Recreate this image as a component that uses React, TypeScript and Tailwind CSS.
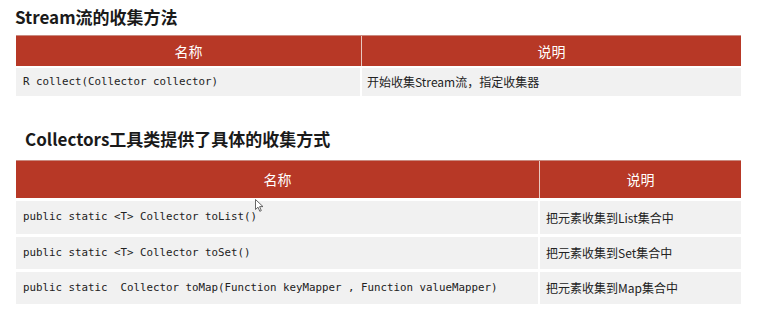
const cjk = "font-['Noto_Sans_CJK_SC','Noto_Sans',sans-serif]";
const mono = "font-['DejaVu_Sans_Mono','Liberation_Mono',monospace]";

const rows2 = [
  { name: "public static <T> Collector toList()", desc: "把元素收集到List集合中", h: "h-[33px]" },
  { name: "public static <T> Collector toSet()", desc: "把元素收集到Set集合中", h: "h-[32px]" },
  { name: "public static  Collector toMap(Function keyMapper , Function valueMapper)", desc: "把元素收集到Map集合中", h: "h-[32px]" },
];

function Cursor() {
  return (
    <svg className="absolute left-[255px] top-[199px]" width="9" height="13" viewBox="0 0 9 13">
      <path d="M0.5 0.5 L0.5 10.5 L3 8.2 L4.8 12.3 L6.3 11.6 L4.6 7.6 L8 7.6 Z" fill="#fff" stroke="#555" strokeWidth="0.9" />
    </svg>
  );
}

export default function App() {
  return (
    <div className={`relative w-[775px] h-[325px] bg-white text-[#222] ${cjk}`}>
      <div className="pl-[15px] pt-[4px] text-[17px] leading-[26px] font-bold text-[#1a1a1a]">Stream流的收集方法</div>

      {/* table 1 */}
      <div className="ml-[16px] mt-[5px] w-[725px] flex flex-col gap-[2px]">
        <div className="h-[31px] grid grid-cols-[346px_1fr] bg-[#b73826] border-t border-[#c98a80] text-white text-[14px]">
          <div className="flex items-center justify-center border-r border-[#e8c8c0]">名称</div>
          <div className="flex items-center justify-center">说明</div>
        </div>
        <div className="h-[28px] grid grid-cols-[346px_1fr] bg-[#f1f1f1] text-[12px]">
          <div className={`flex items-center pl-[7px] text-[10.8px] ${mono} border-r-2 border-white`}>R collect(Collector collector)</div>
          <div className="flex items-center pl-[5px]">开始收集Stream流，指定收集器</div>
        </div>
      </div>

      <div className="pl-[25px] mt-[30px] text-[17px] leading-[26px] font-bold text-[#1a1a1a]">Collectors工具类提供了具体的收集方式</div>

      {/* table 2 */}
      <div className="ml-[16px] mt-[8px] w-[725px] flex flex-col gap-[3px]">
        <div className="h-[38px] grid grid-cols-[524px_1fr] bg-[#b73826] border-t border-[#c98a80] text-white text-[14px]">
          <div className="flex items-center justify-center border-r border-[#e8c8c0]">名称</div>
          <div className="flex items-center justify-center">说明</div>
        </div>
        {rows2.map((r) => (
          <div key={r.desc} className={`${r.h} grid grid-cols-[524px_1fr] bg-[#f1f1f1] text-[12px]`}>
            <div className={`flex items-center pl-[7px] text-[10.8px] whitespace-pre ${mono} border-r-2 border-white`}>{r.name}</div>
            <div className="flex items-center pl-[6px]">{r.desc}</div>
          </div>
        ))}
      </div>

      <Cursor />
    </div>
  );
}
